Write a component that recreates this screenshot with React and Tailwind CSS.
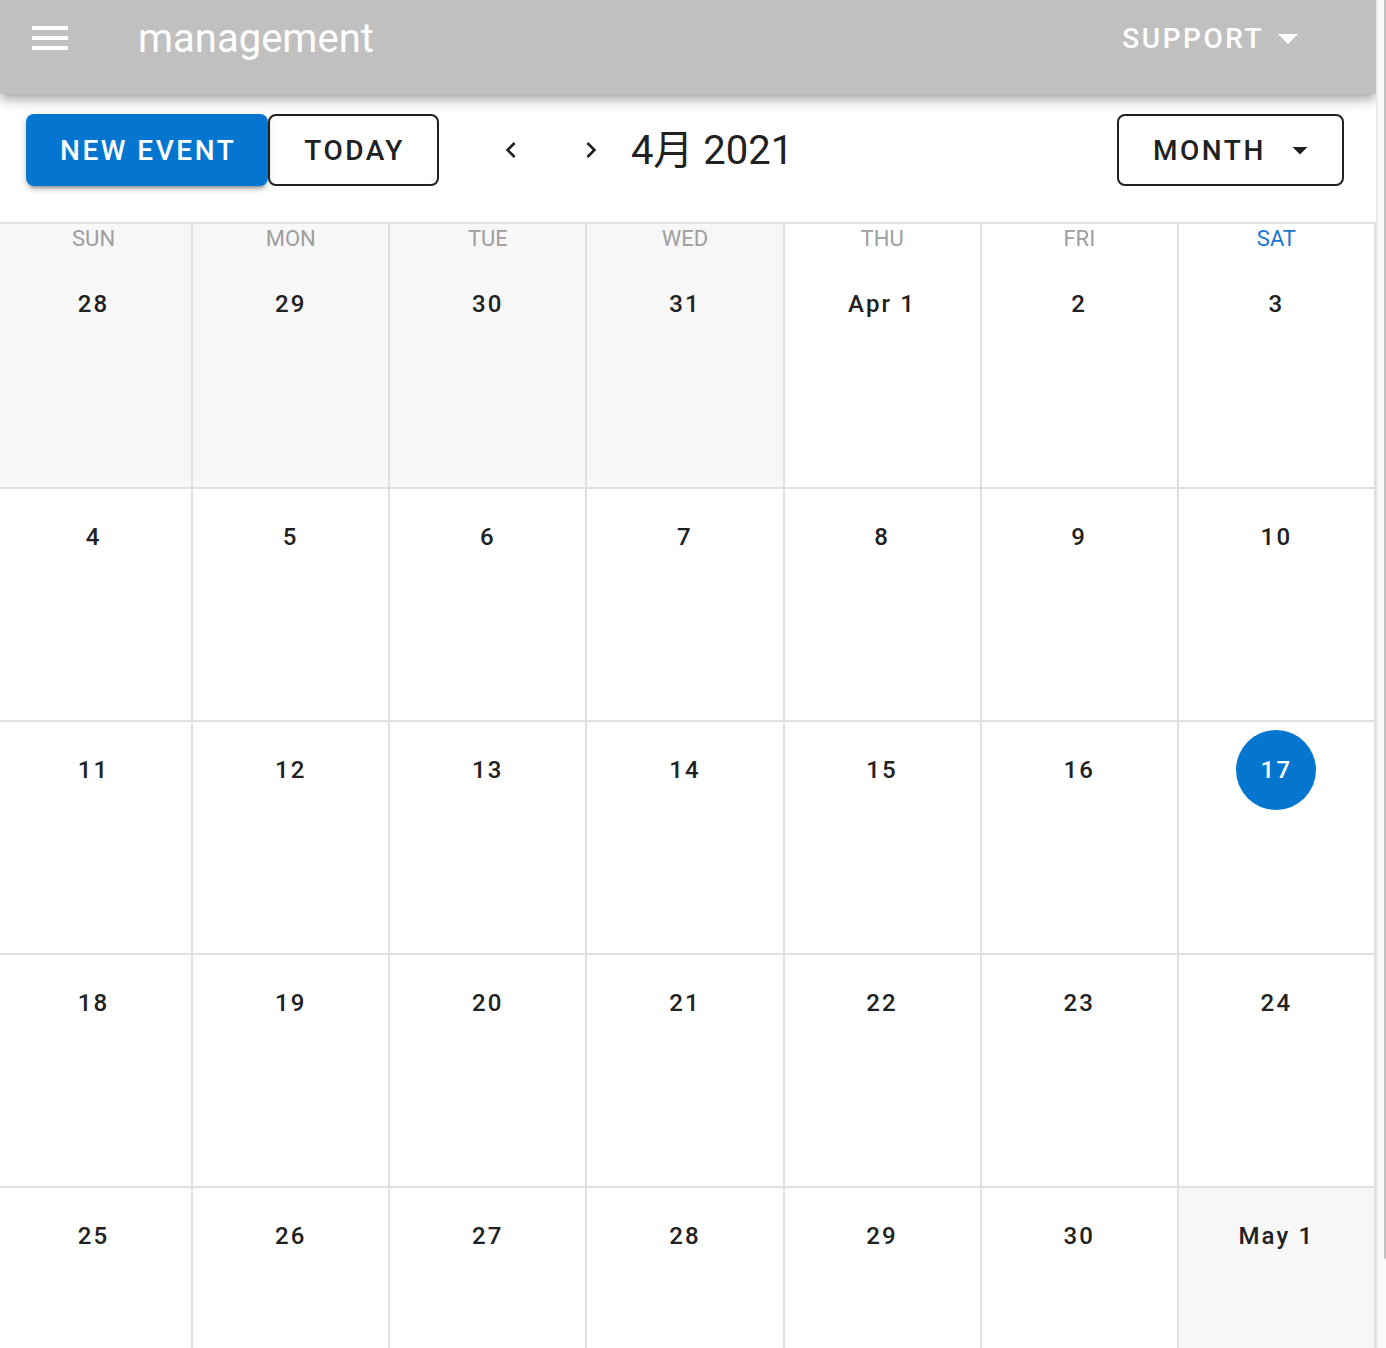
import React from "react";

const WEEKDAYS = ["SUN", "MON", "TUE", "WED", "THU", "FRI", "SAT"];

const WEEKS = [
  ["28", "29", "30", "31", "Apr 1", "2", "3"],
  ["4", "5", "6", "7", "8", "9", "10"],
  ["11", "12", "13", "14", "15", "16", "17"],
  ["18", "19", "20", "21", "22", "23", "24"],
  ["25", "26", "27", "28", "29", "30", "May 1"],
];

const isOutside = (week, day) => (week === 0 && day < 4) || (week === 4 && day === 6);
const isToday = (week, day) => week === 2 && day === 6;

function Icon({ d, className }) {
  return (
    <svg viewBox="0 0 24 24" fill="currentColor" aria-hidden="true" className={className}>
      <path d={d} />
    </svg>
  );
}

function AppBar() {
  return (
    <header className="relative z-10 flex h-[94px] shrink-0 items-center bg-[#c0c0c0] pb-[18px] pl-[26px] pr-16 text-white shadow-[0_4px_8px_-2px_rgba(0,0,0,0.2),0_8px_10px_0_rgba(0,0,0,0.14),0_2px_20px_0_rgba(0,0,0,0.12)]">
      <button type="button" aria-label="Menu" className="mr-16 size-12">
        <Icon d="M3 6h18v2H3V6m0 5h18v2H3v-2m0 5h18v2H3v-2Z" className="size-12" />
      </button>
      <h1 className="pt-0.5 text-[40px] leading-[60px]">management</h1>
      <button
        type="button"
        aria-haspopup="menu"
        className="ml-auto flex items-center text-[28px] font-medium leading-9 tracking-[0.09em]"
      >
        <span className="pt-0.5">SUPPORT</span>
        <Icon d="M7 10l5 5 5-5H7Z" className="size-12" />
      </button>
    </header>
  );
}

function Toolbar() {
  return (
    <div className="flex h-32 shrink-0 items-center pb-4 pl-[26px] pr-8 text-[28px] leading-9">
      <button
        type="button"
        className="h-[72px] rounded-lg bg-[#0476d0] pl-[34px] pr-8 pt-0.5 font-medium tracking-[0.09em] text-white shadow-[0_6px_2px_-4px_rgba(0,0,0,0.2),0_4px_4px_0_rgba(0,0,0,0.14),0_2px_10px_0_rgba(0,0,0,0.12)]"
      >
        NEW EVENT
      </button>
      <button
        type="button"
        className="mr-8 h-[72px] rounded-lg border-2 border-[#212121] pl-[34px] pr-8 pt-0.5 font-medium tracking-[0.09em]"
      >
        TODAY
      </button>
      <button type="button" aria-label="Previous month" className="flex size-20 items-center justify-center">
        <Icon
          d="M15.41 16.58 10.83 12l4.58-4.59L14 6l-6 6 6 6 1.41-1.42Z"
          className="size-8"
        />
      </button>
      <button type="button" aria-label="Next month" className="flex size-20 items-center justify-center">
        <Icon
          d="M8.59 16.58 13.17 12 8.59 7.41 10 6l6 6-6 6-1.41-1.42Z"
          className="size-8"
        />
      </button>
      <h2 className="pt-0.5 text-[40px] leading-[60px]">4月 2021</h2>
      <div className="relative ml-auto">
        <select
          aria-label="Calendar view"
          defaultValue="MONTH"
          className="h-[72px] appearance-none rounded-lg border-2 border-[#212121] bg-transparent pl-[34px] pr-[76px] pt-0.5 font-medium tracking-[0.09em]"
        >
          <option>MONTH</option>
          <option>WEEK</option>
          <option>DAY</option>
        </select>
        <Icon
          d="M7 10l5 5 5-5H7Z"
          className="pointer-events-none absolute right-[26px] top-[18px] size-9"
        />
      </div>
    </div>
  );
}

function Calendar() {
  return (
    <div className="min-h-0 flex-1 overflow-hidden border-t-2 border-[#e0e0e0]">
      <table className="-ml-1 w-[calc(100%+4px)] table-fixed border-separate border-spacing-0">
        <thead>
          <tr className="h-8">
            {WEEKDAYS.map((name, day) => (
              <th
                key={name}
                scope="col"
                className={`border-r-2 border-[#e0e0e0] p-0 align-top text-[22px] font-normal leading-[30px] ${
                  day < 4 ? "bg-[#f7f7f7]" : ""
                } ${day === 6 ? "text-[#1976d2]" : "text-[#9e9e9e]"}`}
              >
                {name}
              </th>
            ))}
          </tr>
        </thead>
        <tbody>
          {WEEKS.map((dates, week) => (
            <tr key={week} className="h-[233px]">
              {dates.map((date, day) => (
                <td
                  key={day}
                  className={`border-b-2 border-r-2 border-[#e0e0e0] p-0 pt-2 text-center align-top ${
                    isOutside(week, day) ? "bg-[#f7f7f7]" : ""
                  }`}
                >
                  <button
                    type="button"
                    className={`h-20 min-w-20 whitespace-nowrap rounded-full text-[24px] font-medium leading-8 tracking-[0.09em] ${
                      isToday(week, day) ? "bg-[#0476d0] text-white" : ""
                    }`}
                  >
                    {date}
                  </button>
                </td>
              ))}
            </tr>
          ))}
        </tbody>
      </table>
    </div>
  );
}

export default function App() {
  return (
    <div className="flex h-screen overflow-hidden bg-white font-[Roboto,'Noto_Sans_CJK_JP',sans-serif] text-[#212121]">
      <main className="flex min-w-0 flex-1 flex-col">
        <AppBar />
        <Toolbar />
        <Calendar />
      </main>
      <div className="relative z-20 flex w-[10px] justify-end border-l-2 border-[#e8e8e8] bg-[#fafafa]">
        <div className="h-[93.4%] w-[2px] rounded-bl-[2px] bg-[#c1c1c1]" />
      </div>
    </div>
  );
}
